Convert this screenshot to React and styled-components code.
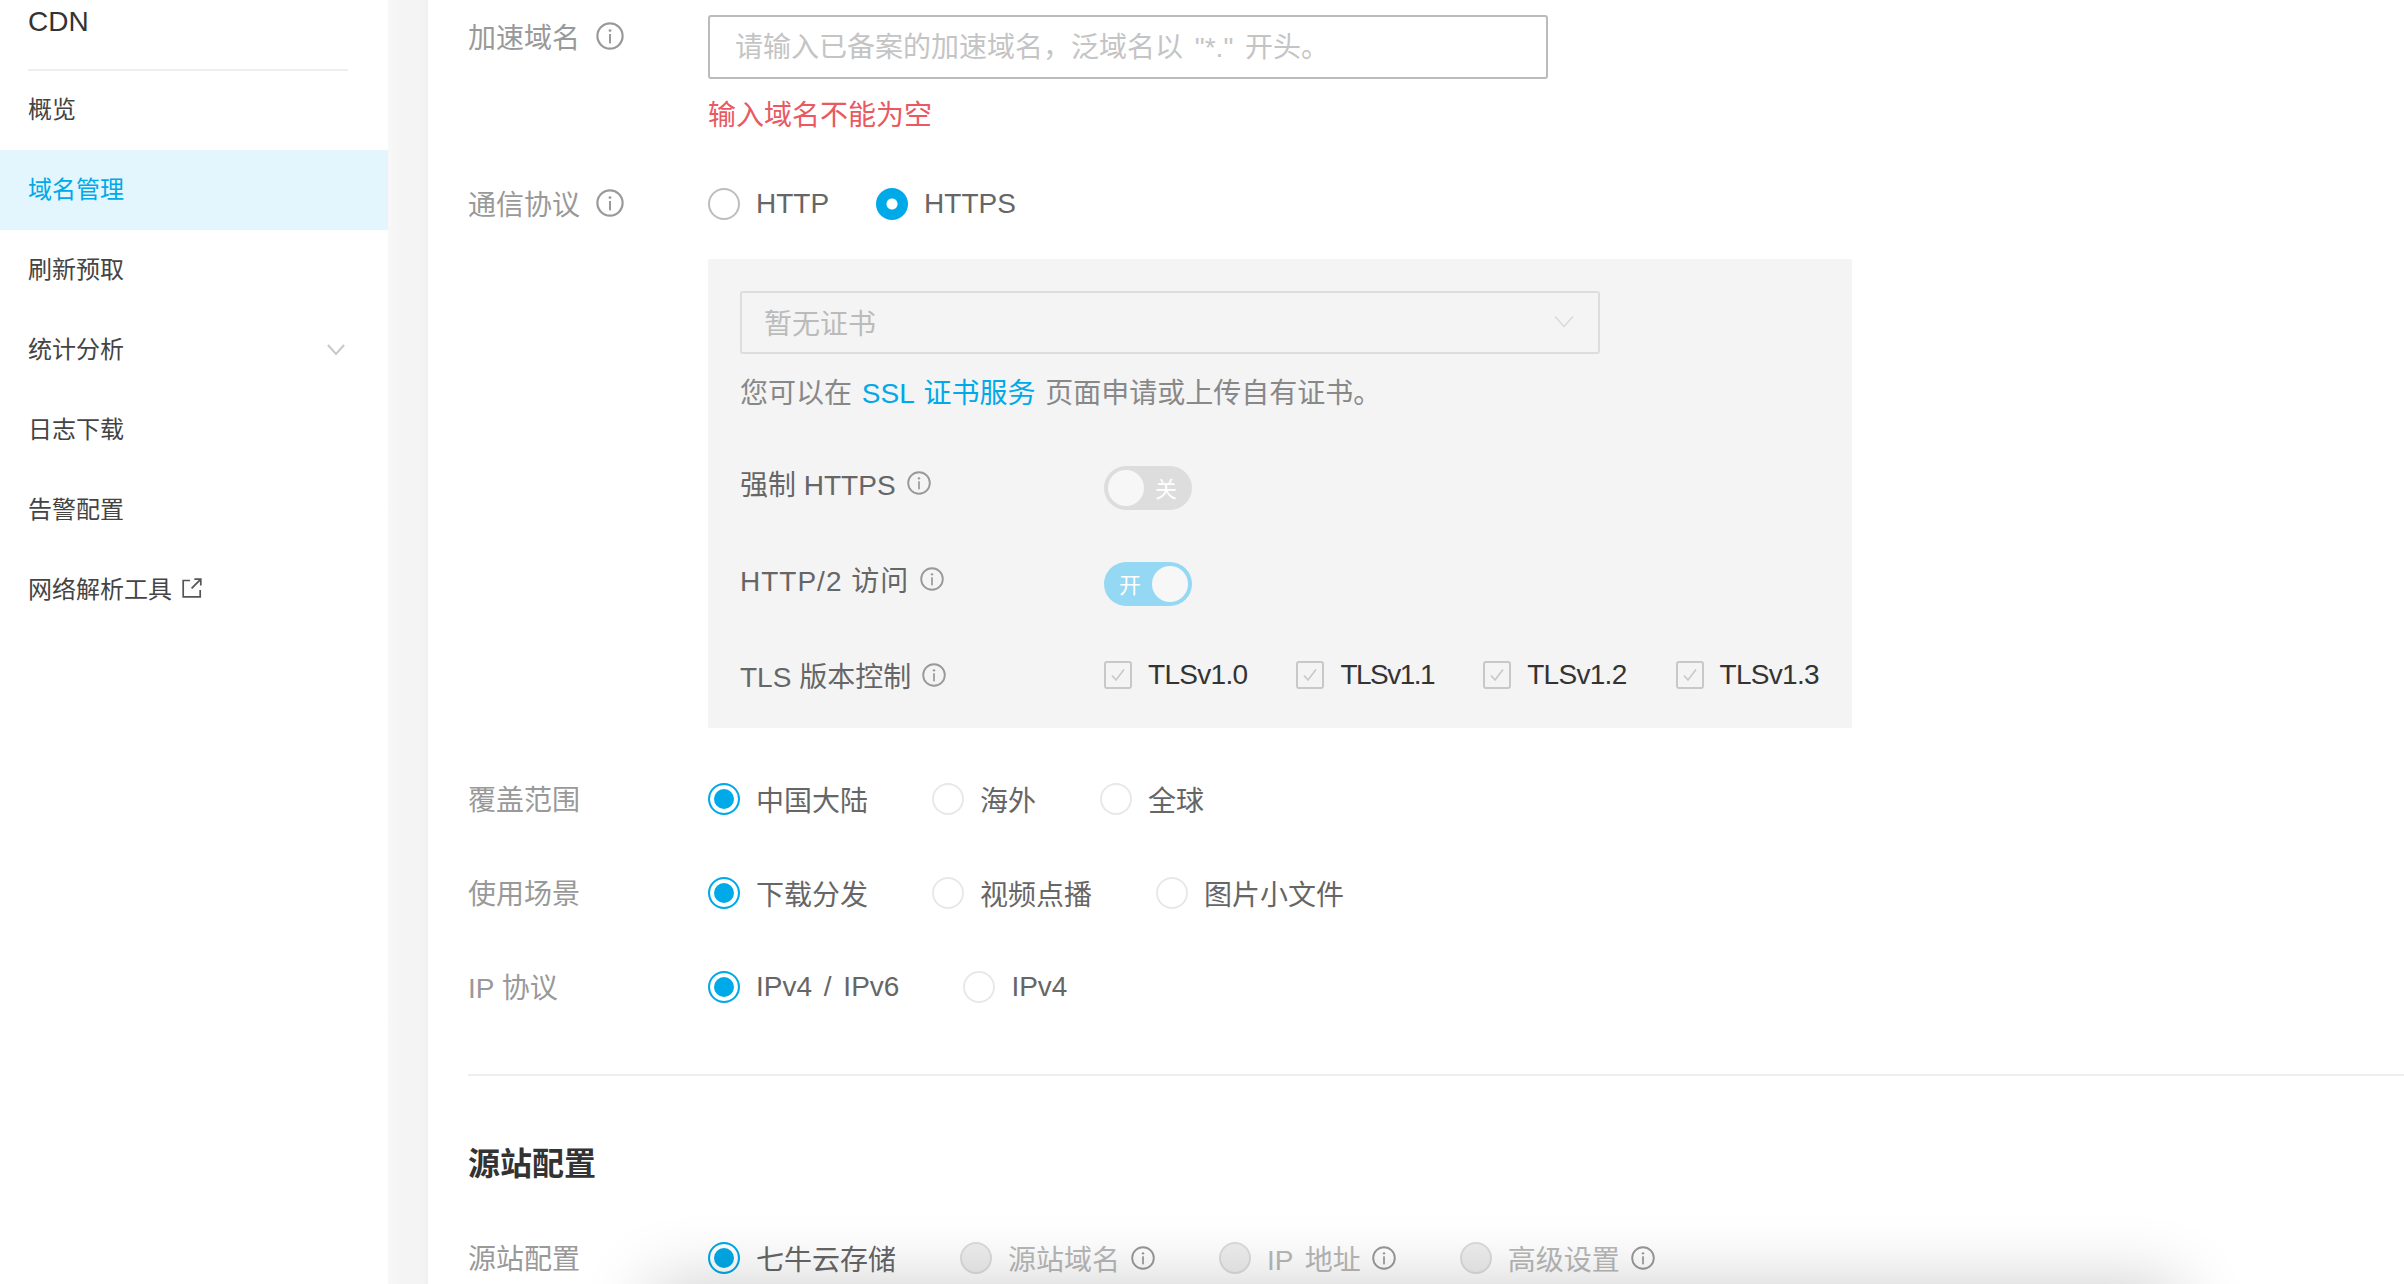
import React from 'react';
import styled, { createGlobalStyle } from 'styled-components';

const BLUE = '#00a9e8';
const FONT = '"Liberation Sans", "Noto Sans CJK SC", sans-serif';

const GlobalStyle = createGlobalStyle`
  html, body {
    margin: 0;
    padding: 0;
    background: #fff;
  }
  * {
    box-sizing: border-box;
  }
  body {
    font-family: ${FONT};
    font-size: 28px;
    color: #666;
  }
`;

const InfoIcon = ({ size = 24 }) => (
  <InfoSvg width={size} height={size} viewBox="0 0 28 28">
    <circle cx="14" cy="14" r="12.6" fill="none" stroke="currentColor" strokeWidth="2.2" />
    <circle cx="14" cy="8.6" r="1.4" fill="currentColor" />
    <rect x="13" y="12" width="2" height="9.4" fill="currentColor" />
  </InfoSvg>
);

const Chevron = ({ width, height, color, stroke }) => (
  <svg width={width} height={height} viewBox="0 0 20 12">
    <path d="M1 1l9 10 9-10" fill="none" stroke={color} strokeWidth={stroke} />
  </svg>
);

const ExternalIcon = () => (
  <ExternalSvg width="20" height="20" viewBox="0 0 20 20">
    <path d="M8 2.5H1.2v16.3h17V12" fill="none" stroke="currentColor" strokeWidth="1.7" />
    <path d="M12.4 1.2h6.4v6.4M18.6 1.4l-9 9" fill="none" stroke="currentColor" strokeWidth="1.7" />
  </ExternalSvg>
);

const Radio = ({ label, checked, solid, disabled, dark, info }) => (
  <RadioItem>
    <RadioCircle $checked={checked} $solid={solid} $disabled={disabled} $dark={dark} />
    <RadioText $disabled={disabled}>{label}</RadioText>
    {info && <InfoIcon size={24} />}
  </RadioItem>
);

const Tick = ({ label, tight }) => (
  <CheckItem>
    <CheckBox>
      <svg width="16" height="14" viewBox="0 0 16 14">
        <path d="M2 7.5l4 4.5 8-10.5" fill="none" stroke="#c8c8c8" strokeWidth="1.6" />
      </svg>
    </CheckBox>
    <CheckText $tight={tight}>{label}</CheckText>
  </CheckItem>
);

const NAV = ['概览', '域名管理', '刷新预取', '统计分析', '日志下载', '告警配置', '网络解析工具'];

export default function App() {
  return (
    <Page>
      <GlobalStyle />
      <Sidebar>
        <Brand>CDN</Brand>
        <SideRule />
        {NAV.map((item) => (
          <NavItem key={item} $active={item === '域名管理'}>
            {item}
            {item === '统计分析' && (
              <NavChevron>
                <Chevron width={18} height={11} color="#c8c8c8" stroke={2.2} />
              </NavChevron>
            )}
            {item === '网络解析工具' && <ExternalIcon />}
          </NavItem>
        ))}
      </Sidebar>
      <Gutter />
      <Main>
        <Row>
          <FieldLabel $height={44}>
            加速域名 <InfoIcon size={28} />
          </FieldLabel>
          <div>
            <TextInput placeholder={'请输入已备案的加速域名，泛域名以 "*." 开头。'} />
            <ErrorText>输入域名不能为空</ErrorText>
          </div>
        </Row>

        <ProtocolRow>
          <FieldLabel>
            通信协议 <InfoIcon size={28} />
          </FieldLabel>
          <RadioGroup $gap={47}>
            <Radio label="HTTP" dark />
            <Radio label="HTTPS" checked solid />
          </RadioGroup>
        </ProtocolRow>

        <Panel>
          <CertSelect>
            暂无证书
            <Chevron width={20} height={13} color="#dcdcdc" stroke={1.8} />
          </CertSelect>
          <Hint>
            您可以在 <HintLink>SSL 证书服务</HintLink> 页面申请或上传自有证书。
          </Hint>
          <PanelRows>
            <PanelRow>
              <PanelLabel>
                强制 HTTPS <InfoIcon size={24} />
              </PanelLabel>
              <Switch>
                <Knob />
                <SwitchText>关</SwitchText>
              </Switch>
            </PanelRow>
            <PanelRow>
              <PanelLabel $spaced>
                HTTP/2 访问 <InfoIcon size={24} />
              </PanelLabel>
              <Switch $on>
                <SwitchText>开</SwitchText>
                <Knob />
              </Switch>
            </PanelRow>
            <PanelRow>
              <PanelLabel>
                TLS 版本控制 <InfoIcon size={24} />
              </PanelLabel>
              <CheckGroup>
                <Tick label="TLSv1.0" />
                <Tick label="TLSv1.1" tight />
                <Tick label="TLSv1.2" />
                <Tick label="TLSv1.3" />
              </CheckGroup>
            </PanelRow>
          </PanelRows>
        </Panel>

        <OptionRows>
          <Row>
            <FieldLabel>覆盖范围</FieldLabel>
            <RadioGroup>
              <Radio label="中国大陆" checked />
              <Radio label="海外" />
              <Radio label="全球" />
            </RadioGroup>
          </Row>
          <Row>
            <FieldLabel>使用场景</FieldLabel>
            <RadioGroup>
              <Radio label="下载分发" checked />
              <Radio label="视频点播" />
              <Radio label="图片小文件" />
            </RadioGroup>
          </Row>
          <Row>
            <FieldLabel>IP 协议</FieldLabel>
            <RadioGroup>
              <Radio label="IPv4 / IPv6" checked />
              <Radio label="IPv4" />
            </RadioGroup>
          </Row>
        </OptionRows>

        <Rule />
        <SectionTitle>源站配置</SectionTitle>
        <Row>
          <FieldLabel>源站配置</FieldLabel>
          <RadioGroup>
            <Radio label="七牛云存储" checked />
            <Radio label="源站域名" disabled info />
            <Radio label="IP 地址" disabled info />
            <Radio label="高级设置" disabled info />
          </RadioGroup>
        </Row>
      </Main>
      <BottomBarShadow />
    </Page>
  );
}

const Page = styled.div`
  position: relative;
  display: flex;
  height: 100vh;
  overflow: hidden;
`;

const Sidebar = styled.nav`
  flex: 0 0 388px;
  background: #fff;
`;

const Brand = styled.div`
  height: 44px;
  padding-left: 28px;
  font-size: 28px;
  line-height: 44px;
  color: #333;
`;

const SideRule = styled.div`
  height: 2px;
  margin: 25px 40px -1px 28px;
  background: #eee;
`;

const NavItem = styled.div`
  position: relative;
  display: flex;
  align-items: center;
  gap: 10px;
  height: 80px;
  padding: 0 0 6px 28px;
  font-size: 24px;
  color: ${(p) => (p.$active ? BLUE : '#444')};
  background: ${(p) => (p.$active ? '#e3f5fd' : 'transparent')};
`;

const NavChevron = styled.span`
  position: absolute;
  right: 43px;
  top: 34px;
  display: flex;
`;

const ExternalSvg = styled.svg`
  margin-top: 2px;
  color: #555;
`;

const Gutter = styled.div`
  flex: 0 0 40px;
  background: linear-gradient(90deg, #f8f8f8 0, #f4f4f4 30%, #f4f4f4 85%, #f0f0f0 100%);
`;

const Main = styled.main`
  flex: 1;
  min-width: 0;
  padding: 15px 0 0 40px;
`;

const Row = styled.div`
  display: grid;
  grid-template-columns: 240px 1fr;
  align-items: start;
`;

const ProtocolRow = styled(Row)`
  margin-top: 40px;
`;

const FieldLabel = styled.div`
  display: flex;
  align-items: center;
  gap: 16px;
  height: ${(p) => p.$height || 64}px;
  padding-bottom: 2px;
  color: #999;
`;

const InfoSvg = styled.svg`
  flex: none;
  color: #999;
`;

const TextInput = styled.input`
  display: block;
  width: 840px;
  height: 64px;
  padding: 2px 25px 0;
  border: 2px solid #bbb;
  border-radius: 3px;
  outline: none;
  font-family: ${FONT};
  font-size: 28px;
  word-spacing: 4px;
  background: #fff;

  &::placeholder {
    color: #c4c4c4;
  }
`;

const ErrorText = styled.div`
  margin-top: 21px;
  line-height: 32px;
  color: #e9595f;
`;

const RadioGroup = styled.div`
  display: flex;
  align-items: center;
  gap: ${(p) => p.$gap || 64}px;
  height: 64px;
`;

const RadioItem = styled.div`
  display: flex;
  align-items: center;
  gap: 11px;
`;

const RadioCircle = styled.span`
  flex: none;
  width: 32px;
  height: 32px;
  margin-right: 5px;
  border-radius: 50%;
  border: 2px solid
    ${(p) => (p.$checked ? BLUE : p.$disabled ? '#dcdcdc' : p.$dark ? '#bdbdbd' : '#e8e8e8')};
  background: ${(p) => (p.$disabled ? '#eee' : '#fff')};
  box-shadow: ${(p) =>
    p.$checked
      ? p.$solid
        ? `inset 0 0 0 16px ${BLUE}`
        : `inset 0 0 0 4px #fff, inset 0 0 0 16px ${BLUE}`
      : 'none'};
  ${(p) =>
    p.$solid &&
    `
    background: radial-gradient(circle, #fff 0 5px, ${BLUE} 6px);
    box-shadow: none;
  `}
`;

const RadioText = styled.span`
  color: ${(p) => (p.$disabled ? '#b8b8b8' : '#666')};
  word-spacing: 4px;
  white-space: nowrap;
`;

const Panel = styled.section`
  width: 1144px;
  margin: 23px 0 0 240px;
  padding: 32px 32px 21px;
  background: #f4f4f4;
`;

const CertSelect = styled.div`
  display: flex;
  align-items: center;
  justify-content: space-between;
  width: 860px;
  height: 63px;
  padding: 0 24px 2px 22px;
  border: 2px solid #ddd;
  border-radius: 3px;
  color: #bbb;
`;

const Hint = styled.div`
  margin-top: 20px;
  line-height: 40px;
  word-spacing: 2px;
  color: #888;
`;

const HintLink = styled.span`
  color: ${BLUE};
`;

const PanelRows = styled.div`
  display: flex;
  flex-direction: column;
  gap: 32px;
  margin-top: 37px;
`;

const PanelRow = styled.div`
  display: grid;
  grid-template-columns: 364px 1fr;
  align-items: start;
`;

const PanelLabel = styled.div`
  display: flex;
  align-items: center;
  gap: 11px;
  height: 64px;
  color: #666;
  white-space: nowrap;
  letter-spacing: ${(p) => (p.$spaced ? '1px' : '0')};
`;

const Switch = styled.div`
  display: flex;
  align-items: center;
  width: 88px;
  height: 44px;
  margin-top: 15px;
  padding: 0 4px;
  border-radius: 22px;
  background: ${(p) => (p.$on ? '#94d8f3' : '#ddd')};
`;

const Knob = styled.span`
  flex: none;
  width: 36px;
  height: 36px;
  border-radius: 50%;
  background: #f7f7f7;
`;

const SwitchText = styled.span`
  flex: 1;
  padding-bottom: 3px;
  font-size: 22px;
  text-align: center;
  color: #fff;
`;

const CheckGroup = styled.div`
  display: flex;
  align-items: center;
  gap: 49px;
  height: 64px;
`;

const CheckItem = styled.div`
  display: flex;
  align-items: center;
  gap: 16px;
`;

const CheckBox = styled.span`
  display: flex;
  align-items: center;
  justify-content: center;
  width: 28px;
  height: 28px;
  border: 2px solid #c8c8c8;
  border-radius: 3px;
`;

const CheckText = styled.span`
  color: #333;
  letter-spacing: ${(p) => (p.$tight ? '-1.5px' : '-0.7px')};
`;

const OptionRows = styled.div`
  display: flex;
  flex-direction: column;
  gap: 30px;
  margin-top: 39px;
`;

const Rule = styled.div`
  height: 2px;
  margin-top: 55px;
  background: #eee;
`;

const SectionTitle = styled.h2`
  margin: 64px 0 38px;
  font-size: 32px;
  line-height: 48px;
  font-weight: 700;
  color: #333;
`;

const BottomBarShadow = styled.div`
  position: absolute;
  left: 650px;
  right: 224px;
  top: 100%;
  height: 100px;
  box-shadow: 0 0 70px rgba(0, 0, 0, 0.2);
  pointer-events: none;
`;
